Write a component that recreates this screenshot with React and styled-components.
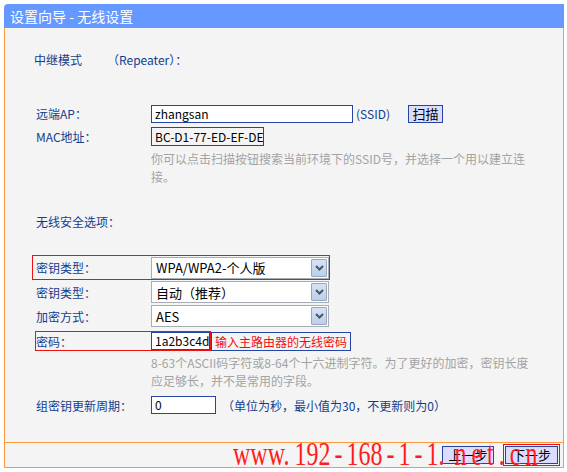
import React from 'react';
import styled, { createGlobalStyle } from 'styled-components';

const LABEL_BLUE = '#123d8f';
const LINE_BLUE = '#2545a6';
const ORANGE = '#f99b3c';
const RED = '#f01010';

const GlobalStyle = createGlobalStyle`
  html, body {
    margin: 0;
    padding: 0;
    background: #ffffff;
    overflow: hidden;
  }
  body {
    font-family: "Noto Sans CJK SC", "DejaVu Sans", sans-serif;
    font-size: 12px;
    color: #000;
  }
`;

const Frame = styled.div`
  width: 560px;
  margin: 4px 0 0 4px;
`;

const TitleBar = styled.div`
  height: 24px;
  background: #6699ff;
  border-top-left-radius: 4px;
  color: #ffffff;
  font-size: 14px;
  line-height: 24px;
  padding-left: 6px;
`;

const Panel = styled.div`
  box-sizing: border-box;
  height: 415px;
  background: #f4f4f4;
  border: 1px solid ${ORANGE};
  border-top: none;
  padding: 19px 0 0 27px;
`;

const Heading = styled.div`
  display: flex;
  align-items: center;
  height: 24px;
  padding-left: 2px;
  color: ${LABEL_BLUE};
`;

const HeadingName = styled.span`
  width: 73px;
`;

// one form line: label column + field column
const Row = styled.div`
  box-sizing: border-box;
  display: flex;
  align-items: center;
  height: ${p => p.$h || 24}px;
  margin-top: ${p => p.$top || 0}px;
  padding-left: 3px;
  border: 1px solid ${p => (p.$marked ? RED : 'transparent')};
  width: ${p => (p.$marked ? '298px' : 'auto')};
  color: ${LABEL_BLUE};
`;

const Label = styled.span`
  width: 115px;
  flex-shrink: 0;
`;

const TextInput = styled.div`
  box-sizing: border-box;
  width: ${p => p.$w}px;
  height: ${p => p.$h || 18}px;
  border: 1px solid ${LINE_BLUE};
  background: ${p => (p.$plain ? 'transparent' : '#ffffff')};
  color: #000;
  padding-left: 3px;
  line-height: ${p => (p.$h || 18) - 2}px;
  white-space: nowrap;
  overflow: hidden;
`;

const Note = styled.span`
  margin-left: ${p => p.$gap || 3}px;
  color: ${LABEL_BLUE};
  white-space: nowrap;
`;

const SmallButton = styled.button`
  box-sizing: border-box;
  width: ${p => p.$w}px;
  height: 18px;
  margin-left: ${p => p.$gap || 0}px;
  padding: 0;
  background: #dcdcff;
  border: 1px solid ${LINE_BLUE};
  color: #000;
  font-family: inherit;
  font-size: 13px;
  line-height: 16px;
  cursor: pointer;
`;

const Help = styled.div`
  margin-top: ${p => p.$top || 0}px;
  padding-left: 119px;
  color: #a3a3a3;
  line-height: 18px;
  white-space: nowrap;
`;

const SelectBox = styled.div`
  box-sizing: border-box;
  display: flex;
  align-items: center;
  width: 178px;
  height: 22px;
  background: #ffffff;
  border: 1px solid #a9adb3;
  padding-left: 4px;
  color: #000;
  font-size: 13px;
`;

const ArrowBtn = styled.span`
  box-sizing: border-box;
  display: flex;
  align-items: center;
  justify-content: center;
  width: 16px;
  height: 18px;
  margin-left: auto;
  margin-right: 1px;
  background: linear-gradient(#d6e3f3, #bccfe8);
  border: 1px solid #97a7bd;
  border-radius: 1px;
`;

const Chevron = () => (
  <svg width="9" height="6" viewBox="0 0 9 6">
    <polyline points="1,1 4.5,4.5 8,1" fill="none" stroke="#4d5868" strokeWidth="2" />
  </svg>
);

const Select = ({ value }) => (
  <SelectBox>
    {value}
    <ArrowBtn>
      <Chevron />
    </ArrowBtn>
  </SelectBox>
);

const RedBox = styled.span`
  box-sizing: border-box;
  display: flex;
  align-items: center;
  height: 20px;
  margin-left: -1px;
  border: 1px solid ${RED};
`;

const HintBox = styled.span`
  box-sizing: border-box;
  height: 19px;
  line-height: 17px;
  padding: 0 3px;
  border: 1px solid ${LINE_BLUE};
  color: ${RED};
  white-space: nowrap;
`;

const Footer = styled.div`
  position: relative;
  box-sizing: border-box;
  display: flex;
  align-items: center;
  justify-content: flex-end;
  height: 25px;
  padding-right: 3px;
  background: #f4f4f4;
  border: 1px solid ${ORANGE};
  border-top: none;
`;

const NextWrap = styled.span`
  box-sizing: border-box;
  display: flex;
  align-items: center;
  justify-content: center;
  width: 57px;
  height: 22px;
  margin-left: 9px;
  border: 1px solid ${RED};
`;

// site watermark stamped over the footer
const Watermark = styled.div`
  position: absolute;
  left: 228px;
  top: 2px;
  z-index: 2;
  font-family: "Liberation Serif", "Times New Roman", serif;
  font-size: 24px;
  line-height: 24px;
  color: #ff1c1c;
  white-space: nowrap;
  transform: scaleY(1.38);
  transform-origin: 0 20px;
  pointer-events: none;
`;

const Seg = styled.span`
  margin-left: ${p => p.$ml || 0}px;
  letter-spacing: ${p => p.$ls || 0}px;
`;

const Dash = styled.span`
  margin: 0 4px;
`;

export default function App() {
  return (
    <>
      <GlobalStyle />
      <Frame>
        <TitleBar>设置向导 - 无线设置</TitleBar>
        <Panel>
          <Heading>
            <HeadingName>中继模式</HeadingName>
            <span>（Repeater）：</span>
          </Heading>

          <Row $h={23} $top={31}>
            <Label>远端AP：</Label>
            <TextInput $w={202}>zhangsan</TextInput>
            <Note>(SSID)</Note>
            <SmallButton $w={35} $gap={18}>扫描</SmallButton>
          </Row>
          <Row $h={23}>
            <Label>MAC地址：</Label>
            <TextInput $w={113} $h={19} $plain>BC-D1-77-ED-EF-DE</TextInput>
          </Row>
          <Help $top={2}>
            你可以点击扫描按钮搜索当前环境下的SSID号，并选择一个用以建立连
            <br />
            接。
          </Help>

          <Row $top={23}>
            <Label>无线安全选项：</Label>
          </Row>

          <Row $h={25} $top={22} $marked>
            <Label>密钥类型：</Label>
            <Select value="WPA/WPA2-个人版" />
          </Row>
          <Row>
            <Label>密钥类型：</Label>
            <Select value="自动（推荐）" />
          </Row>
          <Row>
            <Label>加密方式：</Label>
            <Select value="AES" />
          </Row>
          <Row $top={1}>
            <RedBox>
              <Label>密码：</Label>
              <TextInput $w={59}>1a2b3c4d</TextInput>
            </RedBox>
            <HintBox>输入主路由器的无线密码</HintBox>
          </Row>
          <Help $top={1}>
            8-63个ASCII码字符或8-64个十六进制字符。为了更好的加密，密钥长度
            <br />
            应足够长，并不是常用的字段。
          </Help>

          <Row $top={3}>
            <Label>组密钥更新周期：</Label>
            <TextInput $w={65}>0</TextInput>
            <Note $gap={6}>（单位为秒，最小值为30，不更新则为0）</Note>
          </Row>
        </Panel>

        <Footer>
          <SmallButton $w={52}>上一步</SmallButton>
          <NextWrap>
            <SmallButton $w={53}>下一步</SmallButton>
          </NextWrap>
          <Watermark>
            <Seg>www.</Seg>
            <Seg $ml={5}>192</Seg>
            <Dash>-</Dash>168<Dash>-</Dash>1<Dash>-</Dash>1.
            <Seg $ml={10} $ls={5}>net.cn</Seg>
          </Watermark>
        </Footer>
      </Frame>
    </>
  );
}
